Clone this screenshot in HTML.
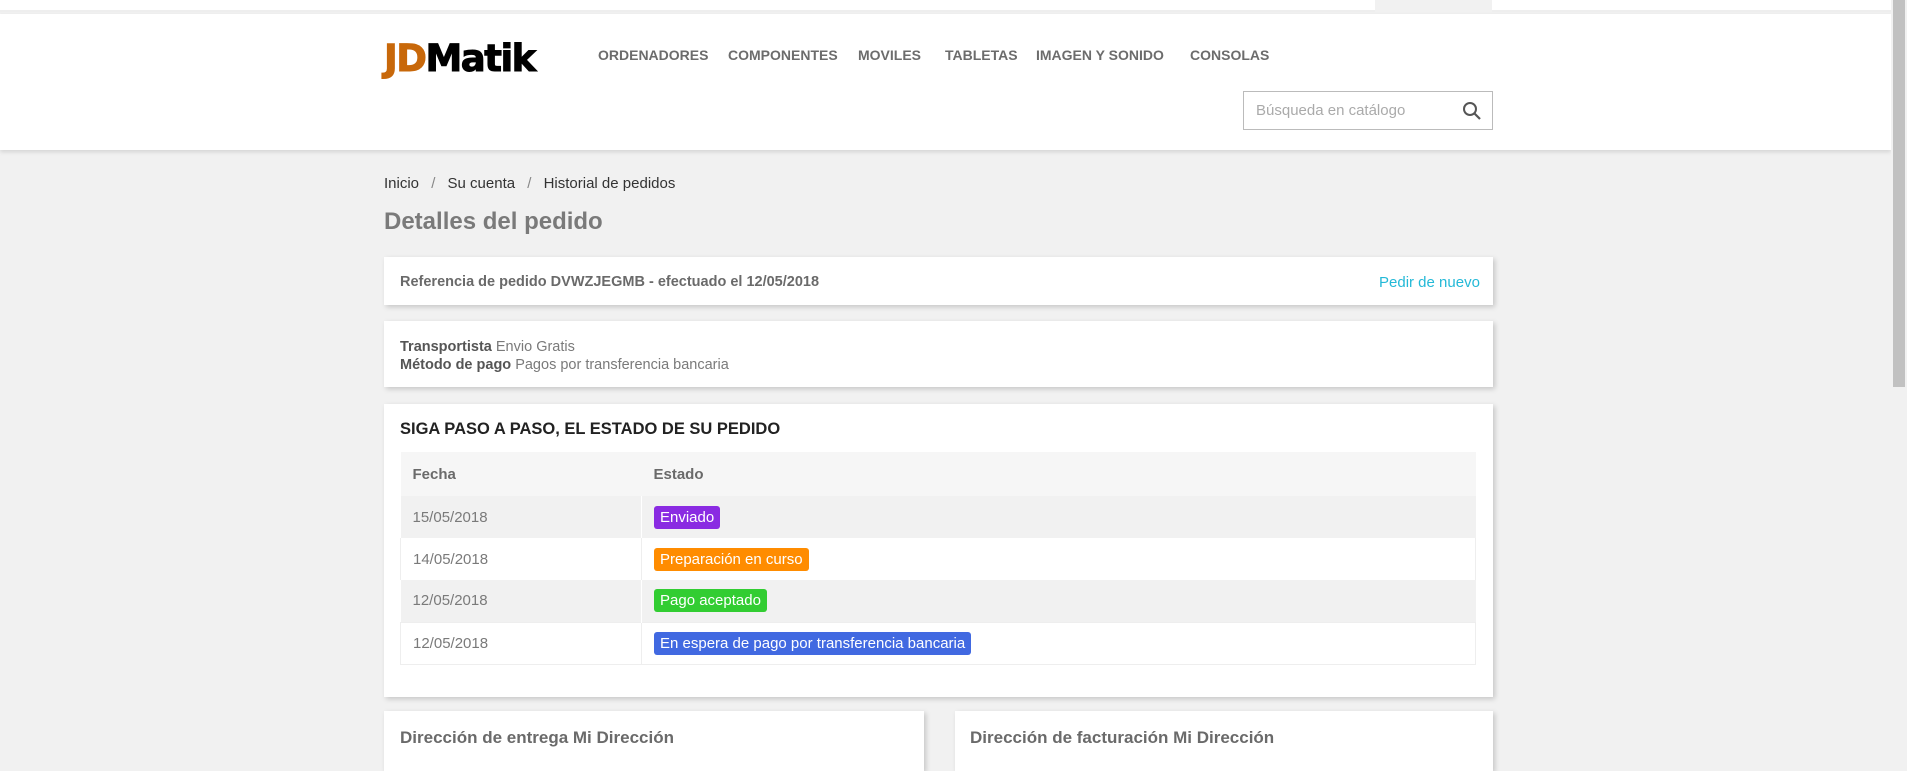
<!DOCTYPE html>
<html><head><meta charset="utf-8"><style>
*{margin:0;padding:0;box-sizing:border-box}
body{width:1907px;height:752px;overflow:hidden;background:#f1f1f1;font-family:"Liberation Sans",sans-serif;color:#7a7a7a;position:relative}
.abs{position:absolute}
.top{left:0;top:0;width:1891px;height:12px;background:#fff;border-bottom:2px solid #eee}
.topbox{left:1375px;top:0;width:117px;height:12px;background:#f1f1f1}
.header{left:0;top:14px;width:1891px;height:136px;background:#fff;box-shadow:0 2px 4px rgba(0,0,0,.12)}
.nav{top:47px;font-size:14px;font-weight:bold;color:#6c6c6c;white-space:nowrap}
.search{left:1243px;top:91px;width:250px;height:39px;border:1px solid #bbb;background:#fff;font-size:15px;color:#aaa;padding:10px 12px}
.card{background:#fff;box-shadow:2px 2px 5px rgba(0,0,0,.18)}
.sb{left:1891px;top:0;width:16px;height:752px;background:#f1f1f1}
.thumb{left:1893px;top:0;width:12px;height:387px;background:#c1c1c1}
td{font-size:15px}
.badge{display:inline-block;color:#fff;font-size:15px;padding:3px 6px;border-radius:3px}
</style></head><body>
<div class="abs top"></div><div class="abs topbox"></div>
<div class="abs header"></div>
<div class="abs" style="left:384px;top:40px;font-size:37px;font-weight:900;font-family:'DejaVu Sans',sans-serif;letter-spacing:-1.5px;line-height:38px;-webkit-text-stroke:1px currentColor"><span style="color:#c8680a">JD</span><span style="color:#000">Matik</span></div>
<div class="abs nav" style="left:598px">ORDENADORES</div>
<div class="abs nav" style="left:728px">COMPONENTES</div>
<div class="abs nav" style="left:858px">MOVILES</div>
<div class="abs nav" style="left:945px">TABLETAS</div>
<div class="abs nav" style="left:1036px">IMAGEN Y SONIDO</div>
<div class="abs nav" style="left:1190px">CONSOLAS</div>
<div class="abs search">Búsqueda en catálogo</div>
<svg class="abs" style="left:1462px;top:101px" width="20" height="20" viewBox="0 0 20 20"><circle cx="8" cy="8" r="6" fill="none" stroke="#555" stroke-width="2"/><path d="M12.5 12.5L18 18" stroke="#555" stroke-width="2.2"/></svg>
<div class="abs" style="left:384px;top:175px;font-size:15px;color:#333">Inicio <span style="color:#888;margin:0 8px">/</span> Su cuenta <span style="color:#888;margin:0 8px">/</span> Historial de pedidos</div>
<div class="abs" style="left:384px;top:208px;font-size:24px;font-weight:bold;color:#7a7a7a">Detalles del pedido</div>

<div class="abs card" style="left:384px;top:257px;width:1109px;height:48px"></div>
<div class="abs" style="left:400px;top:274px;font-size:14.5px;font-weight:bold;color:#6a6a6a">Referencia de pedido DVWZJEGMB - efectuado el 12/05/2018</div>
<div class="abs" style="left:1379px;top:274px;font-size:15px;color:#24b9d7">Pedir de nuevo</div>

<div class="abs card" style="left:384px;top:321px;width:1109px;height:66px"></div>
<div class="abs" style="left:400px;top:338px;font-size:14.5px;line-height:18px;color:#7a7a7a"><b style="color:#555">Transportista</b> Envio Gratis<br><b style="color:#555">Método de pago</b> Pagos por transferencia bancaria</div>

<div class="abs card" style="left:384px;top:404px;width:1109px;height:293px"></div>
<div class="abs" style="left:400px;top:420px;font-size:16.5px;font-weight:bold;color:#222">SIGA PASO A PASO, EL ESTADO DE SU PEDIDO</div>
<table class="abs" style="left:400px;top:452px;width:1076px;border-collapse:collapse">
<tr style="background:#f6f6f6;height:44px"><td style="width:241px;padding-left:12px;font-weight:bold;color:#6a6a6a">Fecha</td><td style="padding-left:12px;font-weight:bold;color:#6a6a6a">Estado</td></tr>
<tr style="background:#f1f1f1;height:42px"><td style="padding-left:12px;border-right:1px solid #fff">15/05/2018</td><td style="padding-left:12px"><span class="badge" style="background:#8a2be2">Enviado</span></td></tr>
<tr style="background:#fff;height:42px"><td style="padding-left:12px;border-right:1px solid #eee;border-left:1px solid #eee">14/05/2018</td><td style="padding-left:12px;border-right:1px solid #eee"><span class="badge" style="background:#ff8c00">Preparación en curso</span></td></tr>
<tr style="background:#f1f1f1;height:42px"><td style="padding-left:12px;border-right:1px solid #fff">12/05/2018</td><td style="padding-left:12px"><span class="badge" style="background:#32cd32">Pago aceptado</span></td></tr>
<tr style="background:#fff;height:42px;border:1px solid #eee"><td style="padding-left:12px;border-right:1px solid #eee">12/05/2018</td><td style="padding-left:12px"><span class="badge" style="background:#4169e1">En espera de pago por transferencia bancaria</span></td></tr>
</table>

<div class="abs card" style="left:384px;top:711px;width:540px;height:60px"></div>
<div class="abs" style="left:400px;top:728px;font-size:17px;font-weight:bold;color:#6a6a6a">Dirección de entrega Mi Dirección</div>
<div class="abs card" style="left:955px;top:711px;width:538px;height:60px"></div>
<div class="abs" style="left:970px;top:728px;font-size:17px;font-weight:bold;color:#6a6a6a">Dirección de facturación Mi Dirección</div>

<div class="abs sb"></div><div class="abs thumb"></div>
</body></html>
